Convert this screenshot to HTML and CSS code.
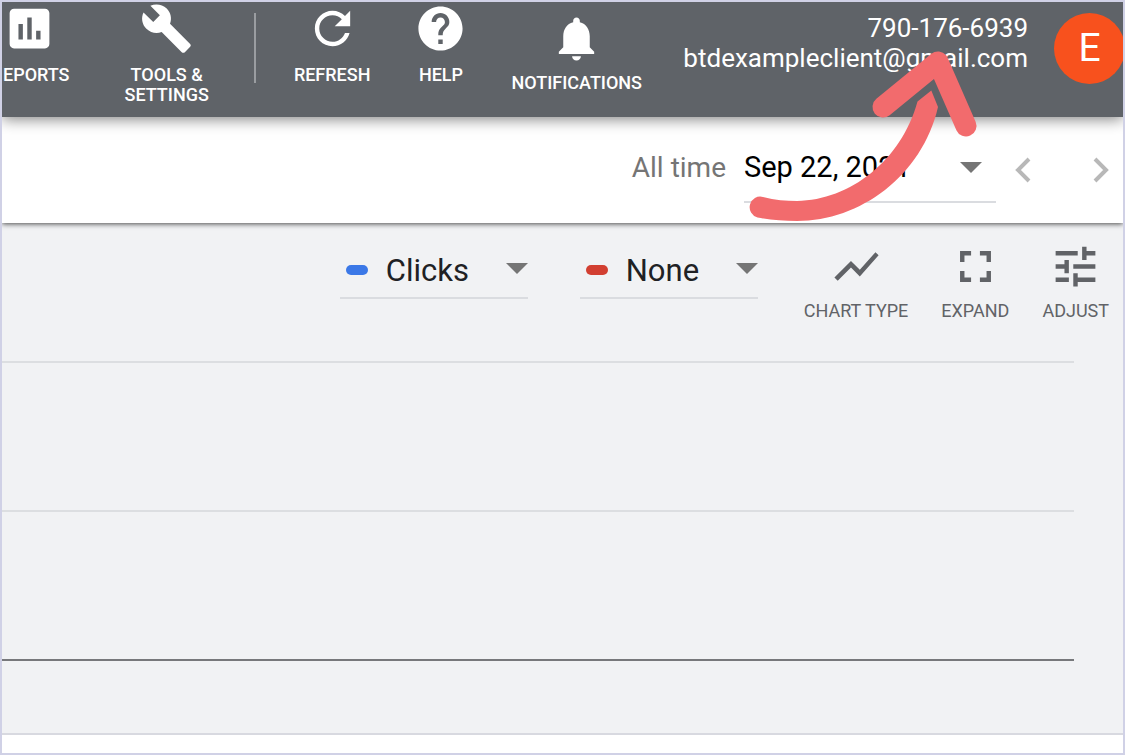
FILE: index.html
```html
<!DOCTYPE html>
<html lang="en">
  <head>
    <meta charset="UTF-8" />
    <meta name="viewport" content="width=device-width, initial-scale=1.0" />
    <title>Overview</title>
    <link rel="stylesheet" href="styles.css">
  </head>
  <body>
    <div class="page">
      <header class="header">
        <nav class="nav">
          <button class="nav-item nav-item-first" type="button">
            <svg class="icon" viewBox="0 0 24 24"><path d="M19 3H5c-1.1 0-2 .9-2 2v14c0 1.1.9 2 2 2h14c1.1 0 2-.9 2-2V5c0-1.1-.9-2-2-2zM9 17H7v-7h2v7zm4 0h-2V7h2v10zm4 0h-2v-4h2v4z"/></svg>
            <span>EPORTS</span>
          </button>
          <button class="nav-item" type="button">
            <svg class="icon" viewBox="0 0 24 24"><path d="M22.7 19l-9.1-9.1c.9-2.3.4-5-1.5-6.9-2-2-5-2.4-7.4-1.3L9 6 6 9 1.6 4.7C.4 7.1.9 10.1 2.9 12.1c1.9 1.9 4.6 2.4 6.9 1.5l9.1 9.1c.4.4 1 .4 1.4 0l2.3-2.3c.5-.4.5-1.1.1-1.4z"/></svg>
            <span>TOOLS &amp;<br>SETTINGS</span>
          </button>
        </nav>
        <div class="separator"></div>
        <div class="actions">
          <button class="nav-item" type="button">
            <svg class="icon" viewBox="0 0 24 24"><path d="M17.65 6.35C16.2 4.9 14.21 4 12 4c-4.42 0-7.99 3.58-7.99 8s3.57 8 7.99 8c3.73 0 6.84-2.55 7.73-6h-2.08c-.82 2.33-3.04 4-5.65 4-3.31 0-6-2.69-6-6s2.69-6 6-6c1.66 0 3.14.69 4.22 1.78L13 11h7V4l-2.35 2.35z"/></svg>
            <span>REFRESH</span>
          </button>
          <button class="nav-item" type="button">
            <svg class="icon" viewBox="0 0 24 24"><path d="M12 2C6.48 2 2 6.48 2 12s4.48 10 10 10 10-4.48 10-10S17.52 2 12 2zm1 17h-2v-2h2v2zm2.07-7.75l-.9.92C13.45 12.9 13 13.5 13 15h-2v-.5c0-1.1.45-2.1 1.17-2.83l1.24-1.26c.37-.36.59-.86.59-1.41 0-1.1-.9-2-2-2s-2 .9-2 2H8c0-2.21 1.79-4 4-4s4 1.79 4 4c0 .88-.36 1.68-.93 2.25z"/></svg>
            <span>HELP</span>
          </button>
          <button class="nav-item nav-item-alerts" type="button">
            <svg class="icon" viewBox="0 0 24 24"><path d="M12 22c1.1 0 2-.9 2-2h-4c0 1.1.89 2 2 2zm6-6v-5c0-3.07-1.64-5.64-4.5-6.32V4c0-.83-.67-1.5-1.5-1.5s-1.5.67-1.5 1.5v.68C7.63 5.36 6 7.92 6 11v5l-2 2v1h16v-1l-2-2z"/></svg>
            <span>NOTIFICATIONS</span>
          </button>
        </div>
        <div class="account">
          <div class="account-info">
            <div>790-176-6939</div>
            <div>btdexampleclient@gmail.com</div>
          </div>
          <button class="avatar" type="button" aria-label="Account">E</button>
        </div>
      </header>

      <div class="date-bar">
        <label class="date-label" for="date-range">All time</label>
        <div class="dropdown date-dropdown">
          <select id="date-range">
            <option>Sep 22, 2021</option>
          </select>
          <svg class="caret" viewBox="0 0 22 11"><path d="M0 0h22L11 11z"/></svg>
        </div>
        <button class="step" type="button" aria-label="Previous period">
          <svg viewBox="0 0 18 26"><path d="M15 2L4 13l11 11"/></svg>
        </button>
        <button class="step" type="button" aria-label="Next period">
          <svg viewBox="0 0 18 26"><path d="M3 2l11 11L3 24"/></svg>
        </button>
      </div>

      <main class="chart">
        <div class="chart-toolbar">
          <div class="dropdown metric-clicks">
            <span class="swatch swatch-blue"></span>
            <select aria-label="First metric">
              <option>Clicks</option>
            </select>
            <svg class="caret" viewBox="0 0 22 11"><path d="M0 0h22L11 11z"/></svg>
          </div>
          <div class="dropdown metric-none">
            <span class="swatch swatch-red"></span>
            <select aria-label="Second metric">
              <option>None</option>
            </select>
            <svg class="caret" viewBox="0 0 22 11"><path d="M0 0h22L11 11z"/></svg>
          </div>
          <div class="tools">
            <button class="tool" type="button">
              <svg class="icon" viewBox="0 0 24 24"><path d="M3.5 18.49l6-6.01 4 4L22 6.92l-1.41-1.41-7.09 7.97-4-4L2 16.99z"/></svg>
              <span>CHART TYPE</span>
            </button>
            <button class="tool" type="button">
              <svg class="icon" viewBox="0 0 24 24"><path d="M7 14H5v5h5v-2H7v-3zm-2-4h2V7h3V5H5v5zm12 7h-3v2h5v-5h-2v3zM14 5v2h3v3h2V5h-5z"/></svg>
              <span>EXPAND</span>
            </button>
            <button class="tool" type="button">
              <svg class="icon" viewBox="0 0 24 24"><path d="M3 17v2h6v-2H3zM3 5v2h10V5H3zm10 16v-2h8v-2h-8v-2h-2v6h2zM7 9v2H3v2h4v2h2V9H7zm14 4v-2H11v2h10zm-6-4h2V7h4V5h-4V3h-2v6z"/></svg>
              <span>ADJUST</span>
            </button>
          </div>
        </div>
        <div class="plot">
          <div class="grid-line"></div>
          <div class="grid-line"></div>
          <div class="grid-line axis"></div>
        </div>
      </main>

      <!-- callout arrow pointing at the account details -->
      <svg class="callout" viewBox="740 40 250 190">
        <path class="callout-head" d="M883 107L938 62L966 126"/>
        <path class="callout-tail" d="M763 197C775 200 786 201 797 201C850 200 901 161 917.5 101.5L931.3 90.5L938 107C922 176 860 221 797 221C783 221 770 220 757.5 217.5A10.5 10.5 0 0 1 763 197z"/>
      </svg>
    </div>
  </body>
</html>
```
FILE: styles.css
```css
* {
  margin: 0;
  padding: 0;
  box-sizing: border-box;
}

body {
  font-family: Roboto, "Liberation Sans", sans-serif;
  background-color: #fff;
  color: #202124;
}

button,
select {
  font: inherit;
  color: inherit;
  background: none;
  border: none;
  cursor: pointer;
}

.page {
  position: relative;
  display: flex;
  flex-direction: column;
  min-height: 100vh;
  border: 2px solid #d0d1e6;
  overflow: hidden;
}

.icon {
  display: block;
  width: 53px;
  height: 53px;
  fill: currentColor;
}

/* Header */
.header {
  position: relative;
  z-index: 2;
  display: flex;
  align-items: flex-start;
  height: 115px;
  background-color: #5f6368;
  color: #fff;
  box-shadow: 0 2px 14px rgba(0, 0, 0, 0.5);
}

.nav,
.actions {
  display: flex;
  align-items: flex-start;
}

.nav {
  gap: 55px;
  padding-left: 1px;
}

.actions {
  gap: 44px;
}

.nav-item {
  display: flex;
  flex-direction: column;
  align-items: center;
  gap: 10px;
  font-size: 18px;
  font-weight: 500;
  line-height: 20px;
}

.nav-item-first {
  align-items: flex-start;
}

.nav-item-alerts {
  gap: 8px;
  padding-top: 10px;
}

.separator {
  width: 2px;
  height: 70px;
  margin: 11px 38px 0 45px;
  background-color: #9a9da1;
}

.account {
  display: flex;
  align-items: flex-start;
  gap: 26px;
  margin-left: auto;
  margin-right: -2px;
  padding-top: 11px;
}

.account-info {
  font-size: 26px;
  line-height: 30px;
  text-align: right;
}

.avatar {
  width: 71px;
  height: 71px;
  border-radius: 50%;
  background-color: #f8511d;
  font-size: 39px;
  line-height: 71px;
}

/* Dropdowns */
.dropdown {
  display: flex;
  align-items: center;
  border-bottom: 2px solid #dadce0;
}

.dropdown select {
  flex: 1;
  min-width: 0;
  appearance: none;
}

.caret {
  width: 22px;
  height: 11px;
  fill: #757575;
}

/* Date range */
.date-bar {
  position: relative;
  z-index: 1;
  display: flex;
  align-items: center;
  justify-content: flex-end;
  height: 106px;
  padding-right: 13px;
  background-color: #fff;
  box-shadow: 0 1px 5px rgba(0, 0, 0, 0.7);
}

.date-label {
  margin: 0 18px 5px 0;
  font-size: 28px;
  color: #757575;
}

.date-dropdown {
  width: 252px;
  height: 70px;
  margin-bottom: 4px;
  padding-right: 14px;
  font-size: 29px;
  color: #000;
}

.step {
  width: 18px;
  height: 26px;
  margin-left: 18px;
}

.step + .step {
  margin-left: 60px;
}

.step svg {
  display: block;
  fill: none;
  stroke: #b8b8b8;
  stroke-width: 4;
}

/* Chart */
.chart {
  flex: 1;
  display: flex;
  flex-direction: column;
  margin-bottom: 18px;
  background-color: #f1f2f4;
  border-bottom: 2px solid #d8d9e0;
}

.chart-toolbar {
  display: flex;
  align-items: flex-start;
  justify-content: flex-end;
  padding: 17px 14px 0 0;
}

.chart-toolbar .dropdown {
  height: 59px;
  padding-left: 6px;
  font-size: 31px;
}

.chart-toolbar select {
  padding-top: 3px;
}

.metric-clicks {
  width: 188px;
  margin-right: 52px;
}

.metric-none {
  width: 178px;
  margin-right: 46px;
}

.swatch {
  width: 22px;
  height: 10px;
  margin-top: 2px;
  margin-right: 18px;
  border-radius: 5px;
}

.swatch-blue {
  background-color: #3b78e7;
}

.swatch-red {
  background-color: #d23f31;
}

.tools {
  display: flex;
  gap: 33px;
}

.tool {
  display: flex;
  flex-direction: column;
  align-items: center;
  gap: 8px;
  font-size: 18px;
  line-height: 20px;
  color: #616367;
}

.plot {
  flex: 1;
  display: flex;
  flex-direction: column;
  gap: 147px;
  padding: 40px 49px 70px 0;
}

.grid-line {
  height: 2px;
  background-color: #dcdee1;
}

.grid-line.axis {
  background-color: #77787b;
}

/* Callout arrow */
.callout {
  position: absolute;
  z-index: 3;
  top: 38px;
  right: 133px;
  width: 250px;
  height: 190px;
  pointer-events: none;
}

.callout-head {
  fill: none;
  stroke: #f26b6d;
  stroke-width: 21;
  stroke-linecap: round;
  stroke-linejoin: round;
}

.callout-tail {
  fill: #f26b6d;
}
```
